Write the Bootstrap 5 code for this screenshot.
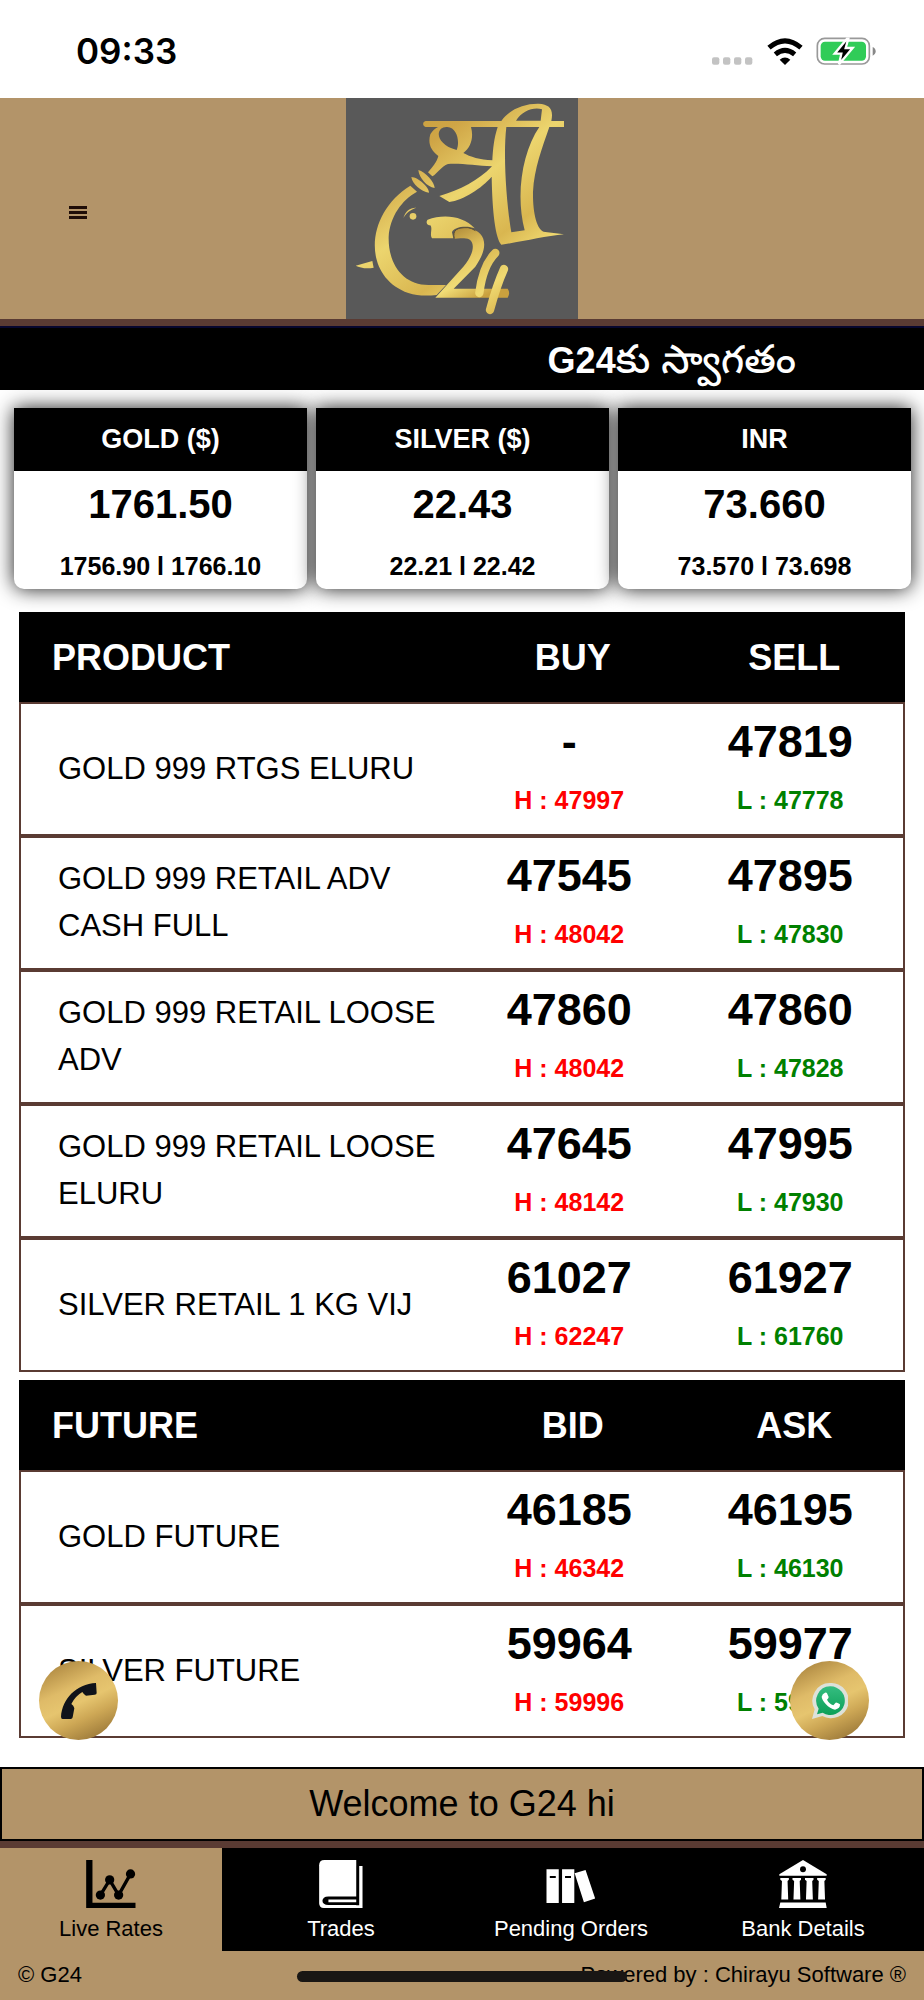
<!DOCTYPE html>
<html lang="en">
<head>
<meta charset="utf-8">
<meta name="viewport" content="width=device-width, initial-scale=1">
<title>G24 Live Rates</title>
<link href="https://cdn.jsdelivr.net/npm/bootstrap@5.3.0/dist/css/bootstrap.min.css" rel="stylesheet">
<style>
  :root { --tan: #b39469; --brown: #5a3b33; }
  body { font-family: "Liberation Sans", Arial, sans-serif; background: #fff; color: #000; }
  svg { display: block; }
  .statusbar { height: 98px; padding: 4px 48px 0 76px; }
  .clock { font: 600 35px/1 Inter, sans-serif; }
  .status-icons { gap: 13px; }
  .brandbar { display: grid; grid-template-columns: 1fr auto 1fr; background: var(--tan); border-bottom: 7px solid var(--brown); }
  .menu-btn { margin: 8px 0 0 57px; padding: 12px; border: 0; background: none; }
  .ticker { height: 64px; line-height: 64px; font-size: 36px; font-family: "Liberation Sans", "Noto Sans Telugu", sans-serif; border-top: 2px solid #06062e; padding-right: 128px; overflow: hidden; }
  .telugu { font-weight: 500; font-size: 39px; }
  .rates { display: grid; grid-template-columns: repeat(3, 1fr); gap: 9px; padding: 18px 13px 0 14px; }
  .rate { border-radius: 0 0 10px 10px; background: #fff; box-shadow: 0 0 20px rgba(0,0,0,.9); text-align: center; font-weight: 700; }
  .rate h2 { margin: 0; background: #000; color: #fff; font-size: 27px; font-weight: 700; line-height: 63px; }
  .rate-now { font-size: 40px; line-height: 66px; }
  .rate-range { font-size: 25px; line-height: 46px; padding-top: 6px; }
  .board { margin: 23px 19px 0; }
  .quotes { width: 100%; table-layout: fixed; border-collapse: separate; border-spacing: 0; margin-bottom: 8px; }
  .quotes:last-of-type { margin-bottom: 0; }
  .quotes th { font-weight: 700; }
  .quotes thead th { height: 90px; background: #000; color: #fff; font-size: 36px; text-align: center; padding: 2px 0 0; }
  .quotes thead th:first-child { width: 50%; text-align: left; padding-left: 33px; }
  .quotes tbody th, .quotes tbody td { height: 134px; border: 0 solid var(--brown); border-width: 2px 0; }
  .quotes tbody th { border-left-width: 2px; font-weight: 400; font-size: 31px; line-height: 47px; padding: 0 16px 2px 37px; }
  .quotes tbody td { text-align: center; font-weight: 700; padding: 4px 7px 10px 0; }
  .quotes tbody td:last-child { border-right-width: 2px; padding-right: 6px; }
  .price { display: block; font-size: 45px; line-height: 68px; }
  .high, .low { display: block; font-size: 25px; line-height: 48px; }
  .high { color: #f00; }
  .low { color: #008000; }
  .fab { position: absolute; bottom: -2px; width: 79px; height: 79px; border-radius: 50%; background: linear-gradient(155deg, #a8823c 5%, #dfbb68 36%, #e6c56f 52%, #cda755 68%, #8c6a30 98%); }
  .fab-call { left: 20px; }
  .fab-chat { right: 36px; }
  .welcome { margin-top: 29px; border: 2px solid #000; background: var(--tan); font-size: 36px; line-height: 70px; }
  .tabs { display: grid; grid-template-columns: 222fr 238fr 222fr 242fr; border-top: 7px solid var(--brown); background: #000; }
  .tabs a { height: 103px; padding-top: 12px; color: #fff; font-size: 22px; line-height: 32px; text-decoration: none; gap: 5px; }
  .tabs a.active { background: var(--tan); color: #000; }
  .copy { height: 49px; background: var(--tan); font-size: 22px; line-height: 47px; padding: 0 18px; }
  .home-pill { position: absolute; left: 50%; top: 20px; width: 330px; height: 11px; margin-left: -165px; border-radius: 6px; background: #191614; }
</style>
</head>
<body>
<div class="statusbar d-flex align-items-center justify-content-between">
  <span class="clock">09:33</span>
  <div class="status-icons d-flex align-items-center">
    <svg width="42" height="8" viewBox="0 0 126 24" fill="#c3c3c3" class="align-self-end" aria-hidden="true"><rect width="22" height="22" y="1" rx="6"/><rect x="33" width="22" height="22" y="1" rx="6"/><rect x="66" width="22" height="22" y="1" rx="6"/><rect x="99" width="22" height="22" y="1" rx="6"/></svg>
    <svg width="36" height="27" viewBox="742 109 108 81" fill="none" stroke="#000" stroke-width="15" aria-hidden="true"><path d="M748 138Q796 97 844 138"/><path d="M767 158Q796 134 825 158"/><path d="M780 174Q796 161 812 174L796 190z" fill="#000" stroke="none"/></svg>
    <svg width="60" height="28" viewBox="888 108 180 84" aria-hidden="true"><rect x="892" y="112" width="156" height="77" rx="22" fill="#fff" stroke="#999" stroke-width="5"/><rect x="902" y="122" width="136" height="57" rx="13" fill="#30cc58"/><path d="M1058 138q9 4 9 13t-9 13z" fill="#888"/><path d="M981 113L944 158h20l-7 32 41-49h-21l8-28z" fill="#000" stroke="#fff" stroke-width="7"/></svg>
  </div>
</div>

<header class="brandbar">
  <div class="d-flex align-items-center">
    <button class="menu-btn" type="button" aria-label="Menu"><svg width="18" height="13" viewBox="0 0 18 13" fill="#1f0d08"><path d="M0 0h18v3H0zM0 5h18v3H0zM0 10h18v3H0z"/></svg></button>
  </div>
  <svg width="232" height="221" viewBox="18 9 696 663" role="img" aria-label="Shree G24">
    <defs>
      <linearGradient id="gold" gradientUnits="userSpaceOnUse" x1="150" y1="60" x2="560" y2="620" spreadMethod="reflect">
        <stop offset="0" stop-color="#c9a03c"/><stop offset=".2" stop-color="#cfa546"/><stop offset=".45" stop-color="#ecd56e"/><stop offset=".7" stop-color="#d9b650"/><stop offset=".85" stop-color="#f0da72"/><stop offset="1" stop-color="#d6b04a"/>
      </linearGradient>
      <linearGradient id="two" gradientUnits="userSpaceOnUse" x1="340" y1="400" x2="440" y2="600">
        <stop offset="0" stop-color="#b08c3a"/><stop offset=".35" stop-color="#e2c25c"/><stop offset=".7" stop-color="#f0dc76"/><stop offset="1" stop-color="#c9a03e"/>
      </linearGradient>
    </defs>
    <path fill="#595959" d="M18 9h696v663H18z"/>
    <g fill="url(#gold)">
      <path fill-rule="evenodd" d="M257 78H484C508 42 555 25 596 26C630 28 641 43 634 78H672V96H628C606 160 583 220 579 290C578 345 588 408 616 411L672 418C615 423 550 440 484 449C466 430 457 350 455 245C425 280 370 315 328 321L298 303C360 285 415 257 456 214C410 212 360 204 324 207C304 214 292 236 277 244L264 232C278 215 291 200 295 183C272 165 263 145 271 118C278 106 285 100 294 96H257C247 94 247 80 257 78Z
        M303 101C287 116 298 152 350 165C360 140 352 98 322 96Q310 95 303 101Z
        M393 96H473C462 130 459 160 457 196C420 195 390 185 370 174C392 158 402 128 393 96Z
        M499 96C489 180 499 325 514 412L554 406C526 300 547 170 598 96Z
        M528 77H602L606 43C580 35 545 49 528 77Z"/>
      <path d="M211 272C75 355 65 545 205 594C232 603 260 603 290 600L318 570H265C190 570 144 508 146 425C150 365 185 315 231 290Z"/>
      <path d="M340 430H276C268 418 279 401 271 391C260 391 257 380 263 374C310 356 370 362 404 400C384 391 340 394 336 412Z"/>
      <path d="M214 246C235 247 268 277 267 293C243 290 217 267 214 246ZM235 225C256 230 284 262 284 279C261 276 237 248 235 225Z"/>
      <path d="M47 512L97 498L101 518C77 523 60 517 47 512ZM190 369C197 347 211 337 229 338C211 344 201 352 190 369Z"/>
      <circle cx="219" cy="364" r="10"/>
    </g>
    <path fill="url(#two)" d="M343 431C337 405 350 397 384 398C440 410 448 455 406 515L341 581H503Q512 594 503 608H286L370 515C405 475 410 430 372 430Q355 429 343 431Z"/>
    <path d="M343 431C337 405 350 397 384 398Q396 400 406 407" fill="none" stroke="#5d5034" stroke-width="3"/>
    <path d="M466 474C440 500 424 545 418 594M492 522C475 560 462 600 450 645" fill="none" stroke="url(#gold)" stroke-width="25" stroke-linecap="round"/>
  </svg>
</header>

<div class="ticker bg-black text-white fw-bold text-end">G24<span class="telugu" lang="te">కు స్వాగతం</span></div>

<main>
  <section class="rates">
    <div class="rate"><h2>GOLD ($)</h2><div class="rate-now">1761.50</div><div class="rate-range">1756.90 l 1766.10</div></div>
    <div class="rate"><h2>SILVER ($)</h2><div class="rate-now">22.43</div><div class="rate-range">22.21 l 22.42</div></div>
    <div class="rate"><h2>INR</h2><div class="rate-now">73.660</div><div class="rate-range">73.570 l 73.698</div></div>
  </section>

  <div class="board position-relative">
    <table class="quotes">
      <thead><tr><th scope="col">PRODUCT</th><th scope="col">BUY</th><th scope="col">SELL</th></tr></thead>
      <tbody>
        <tr><th scope="row">GOLD 999 RTGS ELURU</th><td><span class="price">-</span><span class="high">H : 47997</span></td><td><span class="price">47819</span><span class="low">L : 47778</span></td></tr>
        <tr><th scope="row">GOLD 999 RETAIL ADV CASH FULL</th><td><span class="price">47545</span><span class="high">H : 48042</span></td><td><span class="price">47895</span><span class="low">L : 47830</span></td></tr>
        <tr><th scope="row">GOLD 999 RETAIL LOOSE ADV</th><td><span class="price">47860</span><span class="high">H : 48042</span></td><td><span class="price">47860</span><span class="low">L : 47828</span></td></tr>
        <tr><th scope="row">GOLD 999 RETAIL LOOSE ELURU</th><td><span class="price">47645</span><span class="high">H : 48142</span></td><td><span class="price">47995</span><span class="low">L : 47930</span></td></tr>
        <tr><th scope="row">SILVER RETAIL 1 KG VIJ</th><td><span class="price">61027</span><span class="high">H : 62247</span></td><td><span class="price">61927</span><span class="low">L : 61760</span></td></tr>
      </tbody>
    </table>
    <table class="quotes">
      <thead><tr><th scope="col">FUTURE</th><th scope="col">BID</th><th scope="col">ASK</th></tr></thead>
      <tbody>
        <tr><th scope="row">GOLD FUTURE</th><td><span class="price">46185</span><span class="high">H : 46342</span></td><td><span class="price">46195</span><span class="low">L : 46130</span></td></tr>
        <tr><th scope="row">SILVER FUTURE</th><td><span class="price">59964</span><span class="high">H : 59996</span></td><td><span class="price">59977</span><span class="low">L : 59800</span></td></tr>
      </tbody>
    </table>
    <a href="#call" class="fab fab-call d-flex align-items-center justify-content-center" aria-label="Call"><svg width="36" height="36" viewBox="0 0 108 108" fill="#10131a"><path d="M105 0L107 30Q107 35 101 35L75 38Q68 34 64 27Q42 40 31 63Q38 67 40 76L35 103Q34 108 29 108H5Q0 108 0 101C4 48 45 3 105 0Z"/></svg></a>
    <a href="#chat" class="fab fab-chat d-flex align-items-center justify-content-center" aria-label="WhatsApp"><svg width="36" height="36" viewBox="1048 128 108 108"><defs><linearGradient id="wa" x1="0" y1="0" x2="0" y2="1"><stop offset="0" stop-color="#35bd80"/><stop offset="1" stop-color="#0c9f58"/></linearGradient></defs><path fill="#dde1da" d="M1103 128a53 53 0 1 1-24 99L1048 236L1056 207A53 53 0 0 1 1103 128Z"/><path fill="url(#wa)" d="M1102 138a43 43 0 1 1-22 79L1063 222L1068 205A43 43 0 0 1 1102 138Z"/><path fill="#fff" d="M1087 157q4-2 6 2l5 11q0 3-5 8q7 13 19 17l7-8q4-1 13 5q1 13-15 16C1098 205 1077 180 1077 169Q1079 160 1087 157Z"/></svg></a>
  </div>
</main>

<footer>
  <div class="welcome text-center">Welcome to G24 hi</div>
  <nav class="tabs">
    <a href="#rates" class="active d-flex flex-column align-items-center"><svg width="50" height="48" viewBox="0 0 150 145"><path d="M0 0h19v129h130v16H0z"/><path d="M43 106L71 60L98 106L134 42" fill="none" stroke="#000" stroke-width="10"/><circle cx="43" cy="106" r="14"/><circle cx="71" cy="60" r="14"/><circle cx="98" cy="106" r="14"/><circle cx="134" cy="42" r="14"/></svg><span>Live Rates</span></a>
    <a href="#trades" class="d-flex flex-column align-items-center"><svg width="44" height="48" viewBox="0 0 132 145" fill="#fff"><path d="M0 16Q0 0 16 0H112V145H14Q0 145 0 130Z"/><path fill="#000" d="M28 110H121V136H28C4 136 4 110 28 110Z"/><path d="M28 119H112V128H28ZM121 18H131V145H100V137H121Z"/></svg><span>Trades</span></a>
    <a href="#orders" class="d-flex flex-column align-items-center"><svg width="50" height="48" viewBox="0 -26 148 145" fill="#fff"><path d="M0 2H37V104H0ZM47 2H84V104H47ZM85 14L118 4L147 90L113 102Z"/><path fill="#000" d="M10 22h18v6H10zM56 22h18v6H56z"/></svg><span>Pending Orders</span></a>
    <a href="#bank" class="d-flex flex-column align-items-center"><svg width="48" height="48" viewBox="0 0 146 146" fill="#fff"><path d="M73 0L145 43V48H1V43Z"/><circle cx="73" cy="28" r="9" fill="#000"/><path d="M4 55h26v5l-4 4 2 56H7L9 64 4 60zM41 55h26v5l-4 4 2 56H44l2-56-5-4zM79 55h26v5l-4 4 2 56H82l2-56-5-4zM116 55h26v5l-4 4 2 56H119l2-56-5-4zM4 129H142L145 146H0Z"/></svg><span>Bank Details</span></a>
  </nav>
  <div class="copy position-relative d-flex justify-content-between"><span>© G24</span><span>Powered by : Chirayu Software ®</span><div class="home-pill"></div></div>
</footer>
<script src="https://cdn.jsdelivr.net/npm/bootstrap@5.3.0/dist/js/bootstrap.bundle.min.js"></script>
</body>
</html>
